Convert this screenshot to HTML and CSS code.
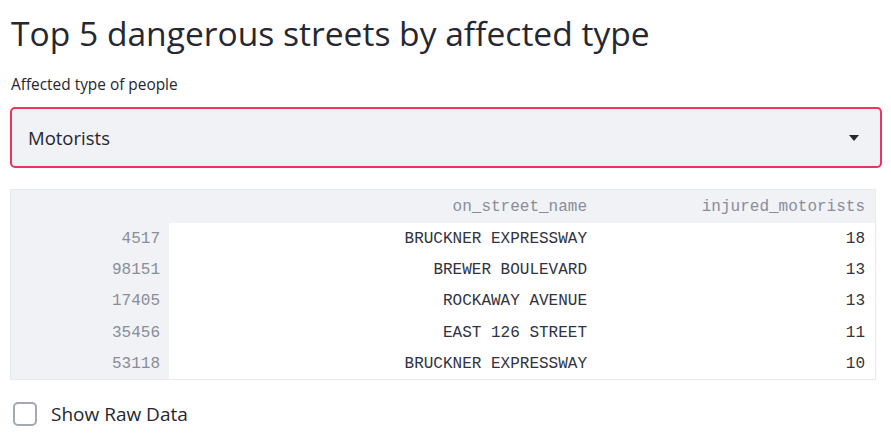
FILE: index.html
```html
<!DOCTYPE html>
<html>
<head>
<meta charset="utf-8">
<link rel="stylesheet" href="styles.css">
</head>
<body>
<main class="page">
  <h1 class="title">Top 5 dangerous streets by affected type</h1>
  <label class="field-label">Affected type of people</label>
  <div class="select">
    <span class="select-value">Motorists</span>
    <svg class="caret" width="10" height="6" viewBox="0 0 10 6"><path d="M0 0h10L5 6z" fill="#262730"/></svg>
  </div>
  <div class="table-wrap">
    <table class="df">
      <thead>
        <tr><th class="idx"></th><th class="c1">on_street_name</th><th class="c2">injured_motorists</th></tr>
      </thead>
      <tbody>
        <tr><td class="idx">4517</td><td>BRUCKNER EXPRESSWAY</td><td>18</td></tr>
        <tr><td class="idx">98151</td><td>BREWER BOULEVARD</td><td>13</td></tr>
        <tr><td class="idx">17405</td><td>ROCKAWAY AVENUE</td><td>13</td></tr>
        <tr><td class="idx">35456</td><td>EAST 126 STREET</td><td>11</td></tr>
        <tr><td class="idx">53118</td><td>BRUCKNER EXPRESSWAY</td><td>10</td></tr>
      </tbody>
    </table>
  </div>
  <label class="checkbox">
    <span class="box"></span>
    <span class="cb-text">Show Raw Data</span>
  </label>
</main>
</body>
</html>
```

FILE: styles.css
```css
* { box-sizing: border-box; }
html, body { margin: 0; padding: 0; background: #fff; }
body { font-family: "Open Sans", "Noto Sans", sans-serif; color: #262730; }
.page { padding: 10px 9px 0 10px; width: 891px; }
.title {
  margin: 0;
  font-size: 33.6px;
  font-weight: 400;
  line-height: 46px;
  padding-left: 1px;
}
.field-label {
  display: block;
  margin-top: 19px;
  font-size: 15.4px;
  line-height: 20px;
  padding-left: 1px;
}
.select {
  margin-top: 12px;
  height: 61px;
  border: 2px solid #f0325f;
  border-radius: 5px;
  background: #f0f2f6;
  display: flex;
  align-items: center;
  justify-content: space-between;
  padding: 0 21px 0 16px;
}
.select-value { font-size: 18.5px; }
.caret { display: block; }
.table-wrap {
  margin-top: 21px;
  margin-right: 6px;
  border: 1px solid #e6e9ef;
}
.df {
  width: 100%;
  border-collapse: collapse;
  table-layout: fixed;
  font-family: "Liberation Mono", "DejaVu Sans Mono", monospace;
  font-size: 16px;
}
.df th, .df td {
  text-align: right;
  padding: 0 10px 0 0;
  height: 31.3px;
  white-space: nowrap;
}
.df thead th { background: #f0f2f6; color: #8a8d99; font-weight: 400; height: 33px; }
.df th.idx { width: 158px; }
.df th.c1 { width: 428px; }
.df td.idx { background: #f0f2f6; color: #8a8d99; padding-right: 9px; }
.df td { color: #31333f; }
.checkbox {
  display: flex;
  align-items: center;
  margin-top: 22px;
  padding-left: 3px;
}
.box {
  width: 24px;
  height: 24px;
  border: 2px solid #a3a8b4;
  border-radius: 5px;
  background: #fff;
}
.cb-text { margin-left: 14px; font-size: 19px; line-height: 24px; }
```
